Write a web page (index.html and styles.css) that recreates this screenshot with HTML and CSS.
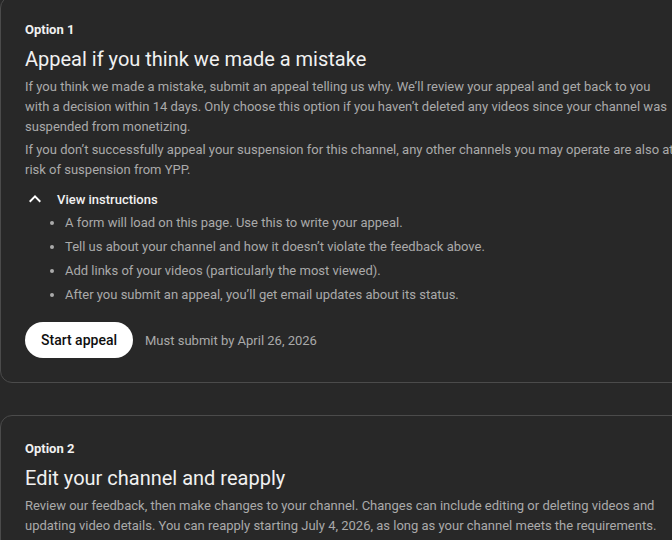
FILE: index.html
```html
<!DOCTYPE html>
<html lang="en">
<head>
    <meta charset="UTF-8">
    <meta name="viewport" content="width=device-width, initial-scale=1.0">
    <title>Monetization options</title>
    <link rel="stylesheet" href="styles.css">
</head>
<body>
    <div class="options">
        <div class="card">
            <div class="option-label">Option 1</div>
            <h2 class="card-title">Appeal if you think we made a mistake</h2>
            <p class="card-text">If you think we made a mistake, submit an appeal telling us why. We’ll review your appeal and get back to you with a decision within 14 days. Only choose this option if you haven’t deleted any videos since your channel was suspended from monetizing.</p>
            <p class="card-text">If you don’t successfully appeal your suspension for this channel, any other channels you may operate are also at risk of suspension from YPP.</p>

            <div class="toggle">
                <svg class="chevron" viewBox="0 0 24 24" width="24" height="24"><path d="M12 8l-6 6 1.41 1.41L12 10.83l4.59 4.58L18 14z" fill="#fff"/></svg>
                <span>View instructions</span>
            </div>
            <ul class="steps">
                <li>A form will load on this page. Use this to write your appeal.</li>
                <li>Tell us about your channel and how it doesn’t violate the feedback above.</li>
                <li>Add links of your videos (particularly the most viewed).</li>
                <li>After you submit an appeal, you’ll get email updates about its status.</li>
            </ul>

            <div class="actions">
                <button type="button" class="btn">Start appeal</button>
                <span class="deadline">Must submit by April 26, 2026</span>
            </div>
        </div>

        <div class="card">
            <div class="option-label">Option 2</div>
            <h2 class="card-title">Edit your channel and reapply</h2>
            <p class="card-text">Review our feedback, then make changes to your channel. Changes can include editing or deleting videos and updating video details. You can reapply starting July 4, 2026, as long as your channel meets the requirements.</p>
        </div>
    </div>
</body>
</html>
```

FILE: styles.css
```css
body
{
    margin: 0;
    background: #282828;
    font-family: Roboto, "Noto Sans", Arial, sans-serif;
    overflow: hidden;
}
.options
{
    width: 700px;
    margin-top: -4px;
}
.card
{
    border: solid 1px #4b4b4b;
    border-radius: 12px;
    padding: 24px;
    margin-bottom: 32px;
}
.option-label
{
    font-size: 13px;
    line-height: 18px;
    font-weight: 700;
    color: #f1f1f1;
}
.card-title
{
    margin: 6px 0 0;
    font-size: 20px;
    line-height: 28px;
    font-weight: 400;
    color: #f1f1f1;
}
.card-text
{
    margin: 4px 0 0;
    font-size: 13px;
    line-height: 20px;
    color: #aaaaaa;
}
.card-text + .card-text
{
    margin-top: 3px;
}
.toggle
{
    display: flex;
    align-items: center;
    gap: 10px;
    margin-top: 7px;
    margin-left: -2px;
    height: 24px;
    font-size: 13px;
    font-weight: 500;
    color: #f1f1f1;
}
.chevron
{
    display: block;
}
.steps
{
    margin: 0;
    padding-left: 40px;
    font-size: 13px;
    line-height: 24px;
    color: #aaaaaa;
}
.actions
{
    display: flex;
    align-items: center;
    gap: 12px;
    margin-top: 15px;
}
.btn
{
    height: 36px;
    padding: 0 16px;
    border: none;
    border-radius: 18px;
    background: #fff;
    color: #0f0f0f;
    font-family: inherit;
    font-size: 14px;
    font-weight: 500;
    cursor: pointer;
}
.deadline
{
    font-size: 13px;
    color: #aaaaaa;
}
```
